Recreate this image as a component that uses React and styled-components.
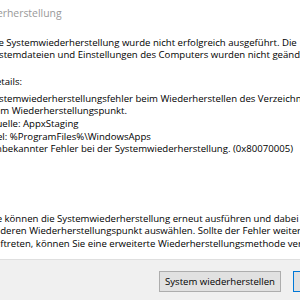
import React from "react";
import styled, { createGlobalStyle } from "styled-components";

const Global = createGlobalStyle`
  html, body { margin: 0; padding: 0; background: #ffffff; }
  body {
    font-family: "Open Sans", "Noto Sans", sans-serif;
  }
`;

const Window = styled.div`
  width: 300px;
  height: 300px;
  overflow: hidden;
  background: #ffffff;
  display: flex;
  flex-direction: column;
`;

const TitleBar = styled.div`
  height: 26px;
  flex: none;
  display: flex;
  align-items: center;
`;

const Title = styled.span`
  margin-left: -61px;
  font-size: 10.4px;
  color: #999999;
  white-space: nowrap;
`;

const Content = styled.div`
  flex: 1;
  margin-left: -11px;
  padding-top: 10.65px;
  font-size: 9.6px;
  line-height: 12.7px;
  color: #000000;
  white-space: nowrap;
`;

const Para = styled.p`
  margin: 0 0 ${(p) => p.$gap || 0}px 0;
`;

const Footer = styled.div`
  flex: none;
  height: 41px;
  border-top: 1px solid #dfdfdf;
  background: #f0f0f0;
  display: flex;
  align-items: flex-start;
  gap: 12px;
  padding: 11px 0 0 159px;
  box-sizing: border-box;
`;

const Button = styled.button`
  flex: none;
  height: 21px;
  width: ${(p) => p.$w}px;
  padding: 0;
  background: #e1e1e1;
  border: 1px solid ${(p) => (p.$default ? "#0078d7" : "#adadad")};
  font-family: "Open Sans", "Noto Sans", sans-serif;
  font-size: 9.6px;
  color: #000000;
  white-space: nowrap;
`;

export default function App() {
  return (
    <Window>
      <Global />
      <TitleBar>
        <Title>Systemwiederherstellung</Title>
      </TitleBar>
      <Content>
        <Para $gap={13.6}>
          Die Systemwiederherstellung wurde nicht erfolgreich ausgeführt. Die
          <br />
          Systemdateien und Einstellungen des Computers wurden nicht geändert.
        </Para>
        <Para $gap={4.3}>Details:</Para>
        <Para $gap={56.5}>
          Systemwiederherstellungsfehler beim Wiederherstellen des Verzeichnisses aus
          <br />
          dem Wiederherstellungspunkt.
          <br />
          Quelle: AppxStaging
          <br />
          Ziel: %ProgramFiles%\WindowsApps
          <br />
          Unbekannter Fehler bei der Systemwiederherstellung. (0x80070005)
        </Para>
        <Para>
          Sie können die Systemwiederherstellung erneut ausführen und dabei einen
          <br />
          anderen Wiederherstellungspunkt auswählen. Sollte der Fehler weiterhin
          <br />
          auftreten, können Sie eine erweiterte Wiederherstellungsmethode verwenden.
        </Para>
      </Content>
      <Footer>
        <Button $w={122}>System wiederherstellen</Button>
        <Button $w={75} $default>Schließen</Button>
      </Footer>
    </Window>
  );
}
